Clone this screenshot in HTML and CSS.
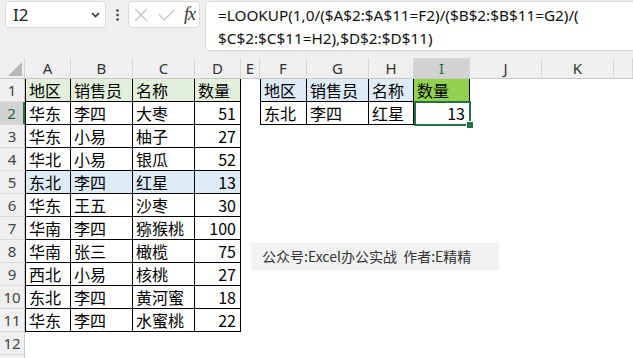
FILE: index.html
```html
<!DOCTYPE html>
<html>
<head>
<meta charset="utf-8">
<title>LOOKUP 多条件查找</title>
<link rel="stylesheet" href="styles.css">
</head>
<body>

<div class="bar">
  <div class="namebox">
    <span>I2</span>
    <svg width="9" height="6" viewBox="0 0 9 6"><path d="M1 1l3.5 3.5L8 1" fill="none" stroke="#333" stroke-width="1.6"/></svg>
  </div>
  <div class="dots">
    <svg width="3" height="12" viewBox="0 0 3 12"><circle cx="1.5" cy="1.5" r="1.3" fill="#444"/><circle cx="1.5" cy="6" r="1.3" fill="#444"/><circle cx="1.5" cy="10.5" r="1.3" fill="#444"/></svg>
  </div>
  <div class="fxbox">
    <svg width="14" height="14" viewBox="0 0 14 14"><path d="M1 1L13 13M13 1L1 13" fill="none" stroke="#c4c4c4" stroke-width="1.2"/></svg>
    <svg width="17" height="12" viewBox="0 0 17 12"><path d="M1 5.5l5.5 5.5L16 1" fill="none" stroke="#c4c4c4" stroke-width="1.2"/></svg>
    <span class="fx">fx</span>
  </div>
  <div class="formula">=LOOKUP(1,0/($A$2:$A$11=F2)/($B$2:$B$11=G2)/(<br>$C$2:$C$11=H2),$D$2:$D$11)</div>
</div>

<div class="sheet">
  <div class="row head">
    <div class="corner"><span class="tri"></span></div>
    <div>A</div><div>B</div><div>C</div><div>D</div><div>E</div><div>F</div>
    <div>G</div><div>H</div><div class="on">I</div><div>J</div><div>K</div><div></div>
  </div>

  <div class="row">
    <div class="rh">1</div>
    <div class="c l g">地区</div><div class="c g">销售员</div><div class="c g">名称</div><div class="c g">数量</div>
    <div></div>
    <div class="c l b">地区</div><div class="c b">销售员</div><div class="c b">名称</div><div class="c k">数量</div>
  </div>
  <div class="row">
    <div class="rh on">2</div>
    <div class="c l">华东</div><div class="c">李四</div><div class="c">大枣</div><div class="c n">51</div>
    <div></div>
    <div class="c l">东北</div><div class="c">李四</div><div class="c">红星</div>
    <div class="c n cur">13<span class="sel"><span class="handle"></span></span></div>
  </div>
  <div class="row">
    <div class="rh">3</div>
    <div class="c l">华东</div><div class="c">小易</div><div class="c">柚子</div><div class="c n">27</div>
  </div>
  <div class="row">
    <div class="rh">4</div>
    <div class="c l">华北</div><div class="c">小易</div><div class="c">银瓜</div><div class="c n">52</div>
  </div>
  <div class="row">
    <div class="rh">5</div>
    <div class="c l b">东北</div><div class="c b">李四</div><div class="c b">红星</div><div class="c n b">13</div>
  </div>
  <div class="row">
    <div class="rh">6</div>
    <div class="c l">华东</div><div class="c">王五</div><div class="c">沙枣</div><div class="c n">30</div>
  </div>
  <div class="row">
    <div class="rh">7</div>
    <div class="c l">华南</div><div class="c">李四</div><div class="c">猕猴桃</div><div class="c n">100</div>
  </div>
  <div class="row">
    <div class="rh">8</div>
    <div class="c l">华南</div><div class="c">张三</div><div class="c">橄榄</div><div class="c n">75</div>
  </div>
  <div class="row">
    <div class="rh">9</div>
    <div class="c l">西北</div><div class="c">小易</div><div class="c">核桃</div><div class="c n">27</div>
  </div>
  <div class="row">
    <div class="rh">10</div>
    <div class="c l">东北</div><div class="c">李四</div><div class="c">黄河蜜</div><div class="c n">18</div>
  </div>
  <div class="row">
    <div class="rh">11</div>
    <div class="c l">华东</div><div class="c">李四</div><div class="c">水蜜桃</div><div class="c n">22</div>
  </div>
  <div class="row">
    <div class="rh">12</div>
  </div>
  <div class="row">
    <div class="rh"></div>
  </div>

  <!-- floating text box -->
  <div class="note">公众号:Excel办公实战&nbsp; 作者:E精精</div>
</div>

</body>
</html>
```

FILE: styles.css
```css
html, body {
  margin: 0;
  overflow: hidden;
}

body {
  width: 633px;
  height: 358px;
  background: #fff;
  font-family: "Noto Sans CJK SC", sans-serif;
  color: #000;
}

/* formula bar */
.bar {
  height: 58px;
  box-sizing: border-box;
  padding: 1px 0 0 5px;
  background: #efefef;
  display: flex;
  align-items: flex-start;
}

.namebox, .fxbox, .formula {
  box-sizing: border-box;
  background: #fff;
  border: 1px solid #d9d9d9;
  border-radius: 4px;
}

.namebox {
  width: 101px;
  height: 27px;
  padding: 0 5px 0 7px;
  display: flex;
  align-items: center;
  justify-content: space-between;
  font: 17px "Noto Sans", sans-serif;
  color: #222;
}

.dots {
  width: 22px;
  height: 27px;
  display: flex;
  align-items: center;
  justify-content: center;
}

.fxbox {
  width: 72px;
  height: 27px;
  padding: 0 4px 0 5px;
  display: flex;
  align-items: center;
  justify-content: space-between;
}

.fx {
  font: italic 18px "Liberation Serif", serif;
  color: #333;
  letter-spacing: -1px;
}

.formula {
  flex: 1;
  height: 50px;
  margin: 0 -8px 0 5px;
  padding: 2px 0 0 12px;
  font: 15.3px/23px "Noto Sans", sans-serif;
  color: #111;
  white-space: nowrap;
}

/* sheet grid */
.sheet {
  position: relative;
}

.row {
  display: grid;
  grid-template-columns: 25px 46px 62px 62px 46px 19px 47px 62px 45px 56px 72px 72px 1fr;
  height: 23px;
}

.row > div {
  box-sizing: border-box;
}

.head {
  height: 21px;
  background: #efefef;
  border-bottom: 1px solid #c8c8c8;
  box-sizing: border-box;
}

.head > div {
  border-right: 1px solid #d6d6d6;
  text-align: center;
  font: 15px/20px "Noto Sans", sans-serif;
  color: #333;
}

.head > .on {
  background: #d2d2d2;
  color: #1e6b41;
}

.corner {
  position: relative;
}

.tri {
  position: absolute;
  right: 2px;
  bottom: 2px;
  width: 0;
  height: 0;
  border-left: 14px solid transparent;
  border-bottom: 14px solid #b8b8b8;
}

.rh {
  background: #efefef;
  border-right: 1px solid #c8c8c8;
  border-bottom: 1px solid #dcdcdc;
  text-align: center;
  font: 15px/22px "Noto Sans", sans-serif;
  color: #444;
}

.rh.on {
  background: #d2d2d2;
  color: #1e6b41;
  border-right: 2px solid #217346;
}

/* table cells */
.c {
  border-right: 1px solid #000;
  border-bottom: 1px solid #000;
  padding: 0 3px;
  font-size: 16px;
  line-height: 22px;
  white-space: nowrap;
  overflow: hidden;
}

.c.l {
  border-left: 1px solid #000;
}

.c.n {
  text-align: right;
  padding-right: 4px;
}

.g { background: #e2efda; }
.b { background: #ddebf7; }
.k { background: #92d050; }

.cur {
  position: relative;
  overflow: visible;
}

.sel {
  position: absolute;
  top: -1px;
  left: 0;
  right: -2px;
  bottom: -2px;
  border: 2px solid #217346;
}

.handle {
  position: absolute;
  right: -5px;
  bottom: -5px;
  width: 6px;
  height: 6px;
  background: #217346;
  border: 1px solid #fff;
}

/* floating shape */
.note {
  position: absolute;
  left: 251px;
  top: 185px;
  width: 248px;
  height: 27px;
  padding-left: 11px;
  box-sizing: border-box;
  background: #f2f2f2;
  font-size: 14px;
  line-height: 27px;
  color: #333;
  white-space: nowrap;
}
```
